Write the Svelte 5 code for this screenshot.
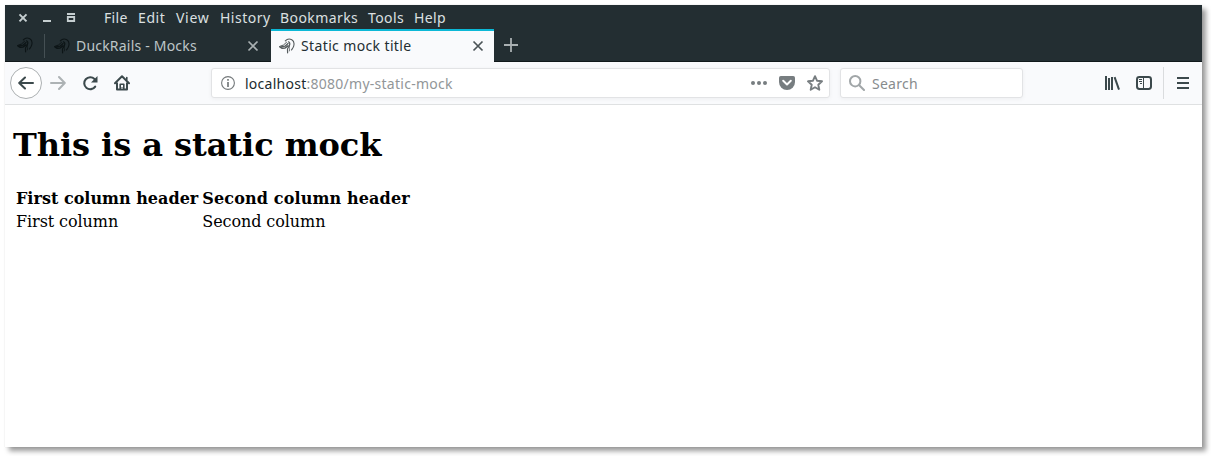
<script>
  const menus = [
    ['File', 34, 0.3], ['Edit', 38, 0.6], ['View', 44, 0.7], ['History', 60, 0.5],
    ['Bookmarks', 88, 0.42], ['Tools', 46, 0.4], ['Help', 40, 0.35]
  ];
</script>

{#snippet duck(tone)}
  <svg class="duck" width="16" height="16" viewBox="0 0 16 16" fill="none" stroke={tone} stroke-linecap="round" stroke-linejoin="round">
    <path d="M.7 8.4 4.5 7 7.6 4.2" stroke-width="1" />
    <path d="M.8 8.8 3.2 10.3 6.2 9.9 9 7.8" stroke-width="1.5" />
    <path d="M2 9 6 8.2 9 5.4" stroke-width="1.3" />
    <path d="M6.3 2.8C8 1 10.7.6 12.8 1.7c2.2 1.3 2.6 4 1.8 6.6-.5 1.7-1.6 2.8-2.1 3.7" stroke-width="1.1" />
    <path d="M9.5 3.8c1.2.6 1.6 2 1 3.6-.5 1.5-2.1 2.4-2 4.1l.1 3.3" stroke-width="1.2" />
    <path d="M10.4 8c-.5 2 .7 3.3 0 5" stroke-width=".8" />
  </svg>
{/snippet}

{#snippet close()}
  <svg width="12" height="12" viewBox="0 0 12 12" fill="none" stroke="currentColor" stroke-width="1.7"><path d="m1.5 1.5 9 9m0-9-9 9" /></svg>
{/snippet}

<div class="window">
  <header class="titlebar">
    <div class="controls">
      <svg width="60" height="12" viewBox="0 0 60 12" fill="none" stroke="#c5ced0">
        <path d="m1.5 2.4 7 7m0-7-7 7" stroke-width="2" />
        <path d="M25 9h8" stroke-width="2" />
        <path d="M49 2h8M49.8 5h6.4v4h-6.4z" stroke-width="1.8" />
      </svg>
    </div>
    <nav>
      {#each menus as [label, width, spacing]}
        <span style="width:{width}px;letter-spacing:{spacing}px">{label}</span>
      {/each}
    </nav>
  </header>

  <div class="tabs">
    <div class="pinned">{@render duck('#0d1517')}</div>
    <div class="tab">
      {@render duck('#0d1517')}
      <span class="label first">DuckRails - Mocks</span>
      {@render close()}
    </div>
    <div class="tab active">
      {@render duck('#555b5d')}
      <span class="label second">Static mock title</span>
      {@render close()}
    </div>
    <svg class="plus" width="14" height="14" viewBox="0 0 14 14" stroke="#a9b0b2" stroke-width="1.8"><path d="M7 0v14M0 7h14" /></svg>
  </div>

  <div class="toolbar">
    <div class="buttons">
      <div class="back">
        <svg width="16" height="16" viewBox="0 0 16 16" fill="none" stroke="#3c494c" stroke-width="2" stroke-linecap="round" stroke-linejoin="round"><path d="M15 8H1.5M7 2.5 1.2 8 7 13.5" /></svg>
      </div>
      <svg width="16" height="16" viewBox="0 0 16 16" fill="none" stroke="#adb2b4" stroke-width="2" stroke-linecap="round" stroke-linejoin="round"><path d="M1 8h13.5M9 2l5.8 6L9 14" /></svg>
      <svg width="16" height="16" viewBox="0 0 16 16"><path d="M13.2 11.6A6 6 0 1 1 12.5 4" fill="none" stroke="#3c494c" stroke-width="2.1" stroke-linecap="round" /><path d="M15.5 1v6.5H9z" fill="#3c494c" /></svg>
      <svg width="16" height="16" viewBox="0 0 16 16" fill="none" stroke="#3c494c" stroke-width="2" stroke-linecap="round" stroke-linejoin="round"><path d="M1 8.2 8 1.3l7 6.9M3 8.2v6.2h10V8.2" /><path d="M6.2 14V9.2h3.6V14M12.8 2.5v2" stroke-width="1.6" /><path d="M8 12.4v.2" stroke-width="1" /></svg>
    </div>

    <div class="field address">
      <svg class="info" width="14" height="14" viewBox="0 0 14 14" fill="none" stroke="#74797b"><circle cx="7" cy="7" r="6.4" stroke-width="1.1" /><path d="M7 3v1.8M7 6v5" stroke-width="1.7" /></svg>
      <span class="url">localhost<i>:8080/my-static-mock</i></span>
      <svg class="dots" width="16" height="4" viewBox="0 0 16 4" fill="#777d80"><circle cx="2" cy="2" r="2" /><circle cx="8" cy="2" r="2" /><circle cx="14" cy="2" r="2" /></svg>
      <svg class="pocket" width="16" height="14" viewBox="0 0 16 14"><path d="M1.8 0h12.4Q16 0 16 1.8V6a8 8 0 0 1-16 0V1.8Q0 0 1.8 0Z" fill="#777d80" /><path d="M4.2 4.8 8 8.4l3.8-3.6" fill="none" stroke="#fff" stroke-width="2" stroke-linecap="round" stroke-linejoin="round" /></svg>
      <svg class="star" width="16" height="16" viewBox="0 0 16 16" fill="none" stroke="#777d80" stroke-width="1.9" stroke-linejoin="round"><path d="m8 1.2 2 4.5 5 .6-3.7 3.4 1 5L8 12.2l-4.3 2.5 1-5L1 6.3l5-.6z" /></svg>
    </div>

    <div class="field search">
      <svg width="16" height="16" viewBox="0 0 16 16" fill="none" stroke="#a1a6a8" stroke-width="2" stroke-linecap="round"><circle cx="6.2" cy="6.2" r="5.2" /><path d="m10.2 10.2 4.8 4.8" /></svg>
      <span>Search</span>
    </div>

    <div class="actions">
      <svg width="16" height="16" viewBox="0 0 16 16" fill="none" stroke="#3c494c"><path d="M2 1v14M5 3v12M8 2v13" stroke-width="2" /><path d="m10.6 2.2 4.4 12.5" stroke-width="2" /></svg>
      <svg class="sidebar" width="16" height="14" viewBox="0 0 16 14" fill="none" stroke="#3c494c"><rect x="1" y="1" width="14" height="12" rx="2.4" stroke-width="2" /><path d="M7.5 1v12M3 3.5h3M3 5.5h3M4 7.5h2" stroke-width="1" /></svg>
      <div class="menu-button">
        <svg width="12" height="12" viewBox="0 0 12 12" stroke="#3c494c" stroke-width="2"><path d="M0 1h12M0 6h12M0 11h12" /></svg>
      </div>
    </div>
  </div>

  <main>
    <h1>This is a static mock</h1>
    <table>
      <thead><tr><th>First column header</th><th>Second column header</th></tr></thead>
      <tbody><tr><td>First column</td><td>Second column</td></tr></tbody>
    </table>
  </main>
</div>

<style>
  :global(body) { background: #fff; }
  :global(#app) { display: flow-root; height: 456px; overflow: hidden; }
  svg { display: block; flex: none; }
  .window {
    box-sizing: border-box;
    width: 1197px;
    height: 442px;
    margin: 5px;
    background: #fff;
    box-shadow: 4px 4px 5px rgba(0, 0, 0, .4), 0 0 1px rgba(0, 0, 0, .12);
    font: 14px/20px "Noto Sans", "Open Sans", sans-serif;
    display: flex;
    flex-direction: column;
  }
  .titlebar { height: 24px; background: #232e32; display: flex; align-items: center; color: #dce0e1; }
  .controls { width: 99px; padding-left: 13px; box-sizing: border-box; padding-top: 1px; }
  nav { display: flex; padding-top: 2px; white-space: nowrap; }
  .tabs { height: 33px; background: #232e32; display: flex; box-shadow: inset 0 -1px #11191b; color: #a9b0b2; }
  .pinned { width: 40px; box-sizing: border-box; height: 24px; margin-top: 5px; padding: 3px 0 0 12px; border-right: 1px solid #455054; }
  .tab { width: 226px; box-sizing: border-box; display: flex; align-items: center; padding: 0 12px 0 9px; }
  .label { flex: 1; margin-left: 6px; white-space: nowrap; }
  .first { color: #bec6c8; letter-spacing: .2px; }
  .active { width: 223px; padding: 0 10px 0 8px; background: #f9fafc; color: #4b5457; box-shadow: inset 0 2px #0cb8d6; }
  .second { color: #232e32; letter-spacing: .37px; }
  .plus { margin: 9px 0 0 10px; }
  .toolbar { box-sizing: border-box; height: 43px; background: #f9fafc; border-bottom: 1px solid #dfe1e2; display: flex; align-items: center; }
  .buttons { display: flex; align-items: center; width: 206px; padding-left: 5px; gap: 16px; box-sizing: border-box; }
  .back { width: 30px; height: 30px; border: 1px solid #acb0b2; border-radius: 50%; background: #fff; display: grid; place-items: center; margin-right: -8px; }
  .field { height: 30px; box-sizing: border-box; border: 1px solid #e2e3e5; border-radius: 3px; background: #fff; display: flex; align-items: center; box-shadow: 0 1px 4px rgba(0, 0, 0, .05); }
  .address { width: 619px; padding: 0 6px 0 9px; }
  .url { color: #202b2e; margin-left: 10px; padding-top: 2px; flex: 1; white-space: nowrap; letter-spacing: .26px; }
  i { font-style: normal; color: #929698; }
  .pocket { margin: 0 12px; }
  .search { width: 183px; margin-left: 10px; padding-left: 8px; color: #878b8d; }
  .search span { margin-left: 7px; padding-top: 2px; letter-spacing: .25px; }
  .actions { margin-left: auto; display: flex; align-items: center; }
  .sidebar { margin: 0 11px 0 16px; }
  .menu-button { height: 32px; width: 39px; border-left: 1px solid #dadcde; box-sizing: border-box; display: grid; align-items: center; padding-left: 13px; }
  main { padding: 0 8px; color: #000; font: 16px/19px "DejaVu Serif", serif; }
  h1 { font-size: 32px; line-height: 37px; margin: 22px 0; letter-spacing: -.06px; }
  table { border-spacing: 2px; }
  th, td { padding: 1px; text-align: left; }
  th { letter-spacing: .01px; }
  th + th { letter-spacing: .14px; }
  td { letter-spacing: -.08px; }
</style>
